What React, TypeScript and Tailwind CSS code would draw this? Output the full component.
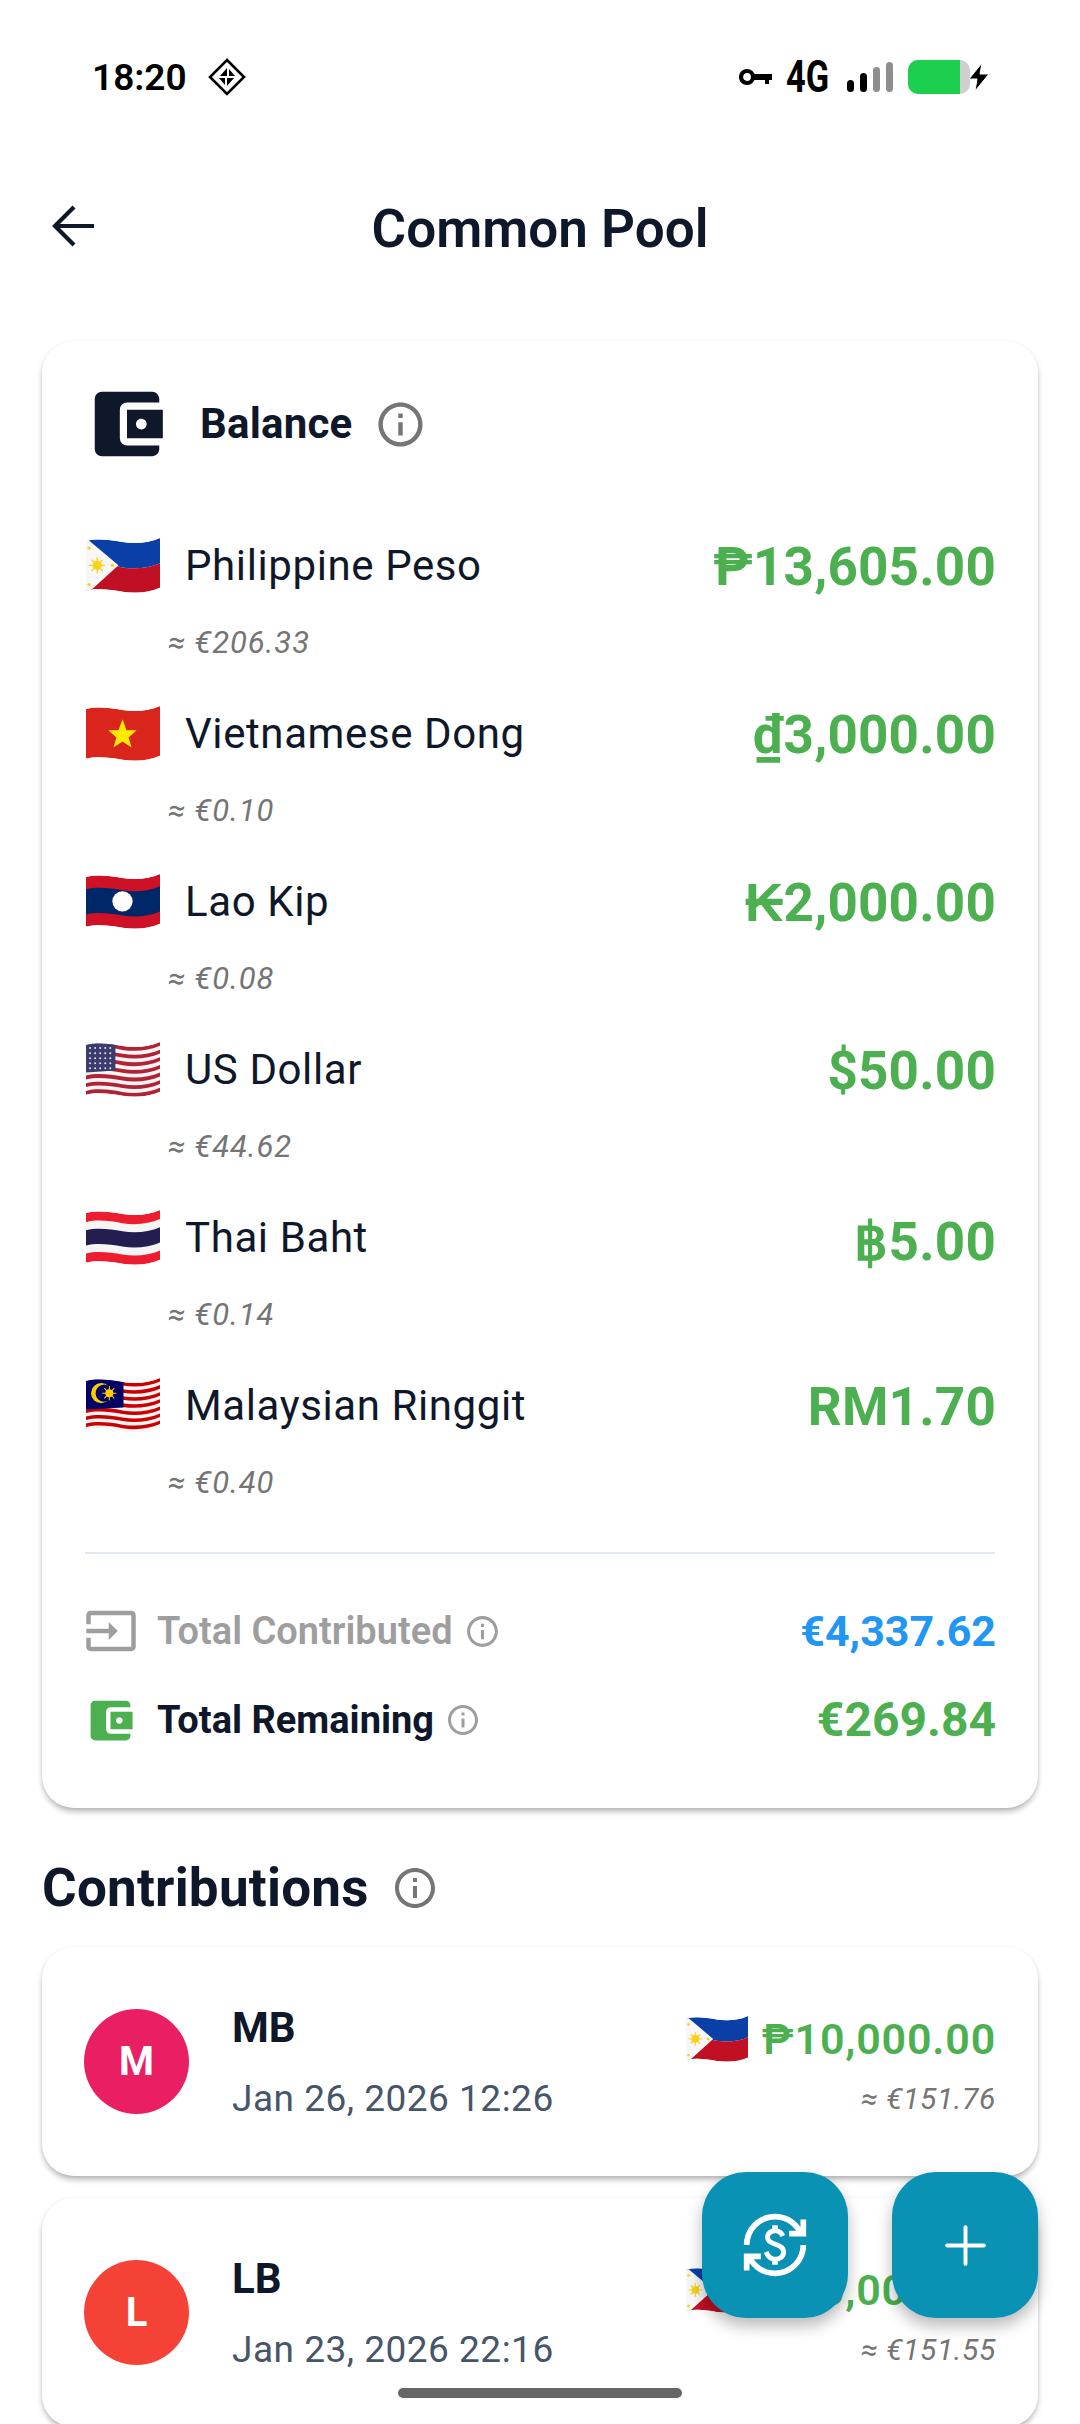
import { Plus } from "lucide-react";
import {
  MdAccountBalanceWallet,
  MdCurrencyExchange,
  MdInfoOutline,
  MdInput,
} from "react-icons/md";

// wavy band across the flag, a and b are the top and bottom offsets
const band = (a: number, b: number) =>
  `M0 ${a + 3} C12 ${a} 24 ${a + 2} 36 ${a + 4} S62 ${a + 5} 73 ${a} L73 ${b} C62 ${b + 5} 48 ${b + 6} 36 ${b + 4} C24 ${b + 2} 12 ${b} 0 ${b + 3} Z`;

function Flag({ id, width = 74, children }: { id: string; width?: number; children: React.ReactNode }) {
  return (
    <svg viewBox="0 0 73 55" width={width} height={(width * 55) / 73} className="shrink-0">
      <defs>
        <clipPath id={id}>
          <path d={band(0, 49)} />
        </clipPath>
      </defs>
      <g clipPath={`url(#${id})`}>{children}</g>
    </svg>
  );
}

function Stripes({ count, red }: { count: number; red: string }) {
  const h = 49 / count;
  return (
    <>
      <path d={band(0, 49)} fill="#f5f5f5" />
      {Array.from({ length: count }).map((_, i) =>
        i % 2 === 0 ? <path key={i} d={band(i * h, (i + 1) * h)} fill={red} /> : null
      )}
    </>
  );
}

function PhFlag({ id, width }: { id: string; width?: number }) {
  return (
    <Flag id={id} width={width}>
      <path d={band(0, 25)} fill="#0a3fa8" />
      <path d={band(25, 49)} fill="#c10f24" />
      <path d="M0 0 L32 27 L0 56 Z" fill="#f7f7f7" />
      <circle cx="11" cy="27" r="4.5" fill="#fcd116" />
      <g stroke="#fcd116" strokeWidth="1.3">
        <path d="M11 19V35M3 27H19M5.5 21.5L16.5 32.5M16.5 21.5L5.5 32.5" />
      </g>
      <circle cx="3" cy="10" r="1.6" fill="#fcd116" />
      <circle cx="3" cy="46" r="1.6" fill="#fcd116" />
      <circle cx="26" cy="27" r="1.6" fill="#fcd116" />
    </Flag>
  );
}

const flags: Record<string, React.ReactNode> = {
  ph: <PhFlag id="flag-ph" />,
  vn: (
    <Flag id="flag-vn">
      <path d={band(0, 49)} fill="#da251d" />
      <path d="M36 13 L40 24 L50 24 L42 31 L45 41 L36 35 L27 41 L30 31 L22 24 L32 24 Z" fill="#ffeb00" />
    </Flag>
  ),
  la: (
    <Flag id="flag-la">
      <path d={band(0, 49)} fill="#ce1126" />
      <path d={band(12, 37)} fill="#002868" />
      <circle cx="36" cy="27" r="10" fill="#ffffff" />
    </Flag>
  ),
  us: (
    <Flag id="flag-us">
      <Stripes count={13} red="#b22234" />
      <path d="M0 0 H29 V28 L0 30 Z" fill="#3c3b6e" />
      <g fill="#dfe0ee">
        {[6, 11, 16, 21, 26].map((y) =>
          [4, 9, 14, 19, 24].map((x) => <circle key={`${x}-${y}`} cx={x} cy={y} r="1" />)
        )}
      </g>
    </Flag>
  ),
  th: (
    <Flag id="flag-th">
      <path d={band(0, 49)} fill="#ed1c2e" />
      <path d={band(9, 40)} fill="#f5f5f5" />
      <path d={band(17, 32)} fill="#241d4f" />
    </Flag>
  ),
  my: (
    <Flag id="flag-my">
      <Stripes count={14} red="#cc0001" />
      <path d="M0 0 H37 V29 L0 31 Z" fill="#010066" />
      <circle cx="15" cy="15" r="10" fill="#ffcc00" />
      <circle cx="18" cy="15" r="8.5" fill="#010066" />
      <circle cx="23" cy="15" r="4" fill="#ffcc00" />
      <path d="M23 8V22M16 15H30M18 10L28 20M28 10L18 20" stroke="#ffcc00" strokeWidth="1" />
    </Flag>
  ),
};

const balances = [
  { flag: "ph", name: "Philippine Peso", amount: "₱13,605.00", euro: "≈ €206.33", nudge: "pt-[2px]" },
  { flag: "vn", name: "Vietnamese Dong", amount: "₫3,000.00", euro: "≈ €0.10", nudge: "pt-[3px]" },
  { flag: "la", name: "Lao Kip", amount: "₭2,000.00", euro: "≈ €0.08", nudge: "pt-[2px]" },
  { flag: "us", name: "US Dollar", amount: "$50.00", euro: "≈ €44.62", nudge: "pt-[2px]" },
  { flag: "th", name: "Thai Baht", amount: "฿5.00", euro: "≈ €0.14", nudge: "pt-[8px]" },
  { flag: "my", name: "Malaysian Ringgit", amount: "RM1.70", euro: "≈ €0.40", nudge: "pt-[3px]" },
];

const contributions = [
  { initial: "M", color: "bg-[#e91e63]", name: "MB", date: "Jan 26, 2026 12:26", amount: "₱10,000.00", euro: "≈ €151.76" },
  { initial: "L", color: "bg-[#f44336]", name: "LB", date: "Jan 23, 2026 22:16", amount: "₱10,000.00", euro: "≈ €151.55" },
];

const cardShadow = "shadow-[0_4px_6px_-1px_rgba(0,0,0,0.32),0_0_4px_rgba(0,0,0,0.03)]";

function StatusBar() {
  return (
    <div className="h-[154px] pl-[92px] pr-[90px] flex items-center justify-between text-black">
      <div className="flex items-center gap-[21px]">
        <span className="text-[37px] font-semibold leading-none">18:20</span>
        <svg viewBox="0 0 38 38" width="38" height="38">
          <path d="M19 2 L36 19 L19 36 L2 19 Z" fill="none" stroke="black" strokeWidth="2.6" />
          <path d="M19 10 L19 18 L12 18 Z M19 28 L19 20 L26 20 Z M21 11 L27 18 L21 18 Z M17 27 L11 20 L17 20 Z" fill="black" />
        </svg>
      </div>
      <div className="flex items-center">
        <svg viewBox="0 0 34 20" width="34" height="20">
          <circle cx="8" cy="10" r="6" fill="none" stroke="black" strokeWidth="4.2" />
          <path d="M13 7H33V13H30V17H26V13H13Z" fill="black" />
        </svg>
        <span className="ml-[13px] text-[44px] font-bold leading-none scale-x-[.78] origin-left w-[46px]">4G</span>
        <svg viewBox="0 0 46 32" width="46" height="32" className="ml-[15px]">
          <rect x="0" y="19" width="7" height="12" rx="3.5" fill="black" />
          <rect x="13" y="12" width="7" height="19" rx="3.5" fill="black" />
          <rect x="26" y="6" width="7" height="25" rx="3.5" fill="#8e8e8e" />
          <rect x="39" y="1" width="7" height="30" rx="3.5" fill="#8e8e8e" />
        </svg>
        <div className="ml-[15px] w-[62px] h-[34px] rounded-[10px] overflow-hidden bg-[#cfcfcf] flex">
          <div className="w-[52px] bg-[#1ccf4e]" />
        </div>
        <svg viewBox="0 0 22 28" width="22" height="28" className="-ml-[2px]">
          <path d="M14 0 L1 16 H9 L7 28 L21 11 H12 Z" fill="black" stroke="white" strokeWidth="1" />
        </svg>
      </div>
    </div>
  );
}

function BalanceRow({ flag, name, amount, euro, nudge }: (typeof balances)[number]) {
  return (
    <div className="h-[168px]">
      <div className="h-[54px] flex items-center justify-between">
        <div className="flex items-center gap-[25px]">
          {flags[flag]}
          <span className="text-[42px] leading-none text-[#0f172a] tracking-[0.6px]">{name}</span>
        </div>
        <span className={`text-[53px] leading-none font-bold text-[#4caf50] tracking-[0.2px] ${nudge}`}>{amount}</span>
      </div>
      <div className="mt-[30px] ml-[82px] h-[40px] flex items-center text-[31px] italic text-[#757575] tracking-[0.9px]">
        {euro}
      </div>
    </div>
  );
}

function ContributionCard({ initial, color, name, date, amount, euro, id }: (typeof contributions)[number] & { id: string }) {
  return (
    <div className={`h-[229px] shrink-0 rounded-[32px] bg-white ${cardShadow} pl-[42px] pr-[42px] flex items-center`}>
      <div className={`w-[105px] h-[105px] rounded-full ${color} flex items-center justify-center text-white text-[40px] font-bold`}>
        {initial}
      </div>
      <div className="ml-[43px] pt-[3px] flex flex-col">
        <span className="text-[42px] leading-[44px] font-bold text-[#0f172a]">{name}</span>
        <span className="mt-[27px] text-[37px] leading-[44px] text-[#475569] tracking-[0.5px]">{date}</span>
      </div>
      <div className="ml-auto pt-[10px] flex flex-col items-end">
        <div className="flex items-center gap-[14px]">
          <PhFlag id={id} width={62} />
          <span className="text-[43px] leading-none font-semibold text-[#4caf50] tracking-[0.8px]">{amount}</span>
        </div>
        <span className="mt-[18px] text-[30px] leading-[36px] italic text-[#757575] tracking-[0.6px]">{euro}</span>
      </div>
    </div>
  );
}

export default function App() {
  return (
    <div className="relative w-[1080px] h-[2424px] overflow-hidden bg-white font-['Roboto',sans-serif]">
      <StatusBar />

      {/* Header */}
      <div className="h-[148px] px-[52px] grid grid-cols-[1fr_auto_1fr] items-center">
        <svg viewBox="0 0 42 42" width="42" height="42" fill="none" stroke="#0f172a" strokeWidth="4.2" className="-mt-[5px]">
          <path d="M42 21H4M22 2L3 21L22 40" />
        </svg>
        <h1 className="pt-[2px] text-[53px] font-semibold leading-none text-[#0f172a]">Common Pool</h1>
      </div>

      {/* Balance */}
      <div className={`mt-[39px] mx-[42px] rounded-[32px] bg-white ${cardShadow} pt-[39px] pb-[61px] pl-[43px] pr-[42px]`}>
        <div className="h-[88px] flex items-center text-[#0f172a]">
          <MdAccountBalanceWallet size={86} className="-ml-[1px]" />
          <span className="ml-[30px] text-[42px] tracking-[0.2px] font-bold leading-none">Balance</span>
          <MdInfoOutline size={53} className="ml-[22px] text-[#757575]" />
        </div>

        <div className="mt-[71px] pl-[1px]">
          {balances.map((b) => (
            <BalanceRow key={b.name} {...b} />
          ))}
        </div>

        <div className="mt-[5px] mr-[1px] h-[2px] bg-[#e2e8f0]" />

        <div className="mt-[49px] h-[56px] flex items-center">
          <MdInput size={54} className="-ml-[1px] text-[#9e9e9e]" />
          <span className="ml-[19px] text-[38px] font-semibold text-[#9e9e9e]">Total Contributed</span>
          <MdInfoOutline size={37} className="ml-[11px] text-[#9e9e9e]" />
          <span className="ml-auto text-[43px] font-bold text-[#2196f3]">€4,337.62</span>
        </div>
        <div className="mt-[32px] pt-[2px] h-[56px] flex items-center">
          <MdAccountBalanceWallet size={53} className="-ml-[1px] text-[#4caf50]" />
          <span className="ml-[20px] text-[38px] font-bold text-[#0f172a]">Total Remaining</span>
          <MdInfoOutline size={36} className="ml-[11px] text-[#9e9e9e]" />
          <span className="ml-auto text-[48px] font-bold text-[#4caf50]">€269.84</span>
        </div>
      </div>

      {/* Contributions */}
      <div className="mt-[50px] mx-[42px] h-[60px] flex items-center">
        <h2 className="text-[53px] tracking-[0.2px] font-bold leading-none text-[#0f172a]">Contributions</h2>
        <MdInfoOutline size={48} className="ml-[22px] text-[#757575]" />
      </div>
      <div className="mt-[29px] mx-[42px] flex flex-col gap-[22px]">
        {contributions.map((c) => (
          <ContributionCard key={c.name} id={`flag-${c.name}`} {...c} />
        ))}
      </div>

      {/* Floating buttons */}
      <div className="absolute left-[702px] top-[2172px] flex gap-[44px]">
        <button className="w-[146px] h-[146px] rounded-[44px] bg-[#0a92b5] text-white flex items-center justify-center shadow-[0_8px_16px_rgba(0,0,0,0.28)]">
          <MdCurrencyExchange size={68} />
        </button>
        <button className="w-[146px] h-[146px] rounded-[44px] bg-[#0a92b5] text-white flex items-center justify-center shadow-[0_8px_16px_rgba(0,0,0,0.28)]">
          <Plus size={63} strokeWidth={1.5} />
        </button>
      </div>

      {/* Home indicator */}
      <div className="absolute left-[398px] top-[2388px] w-[284px] h-[10px] rounded-full bg-[#666666]" />
    </div>
  );
}
